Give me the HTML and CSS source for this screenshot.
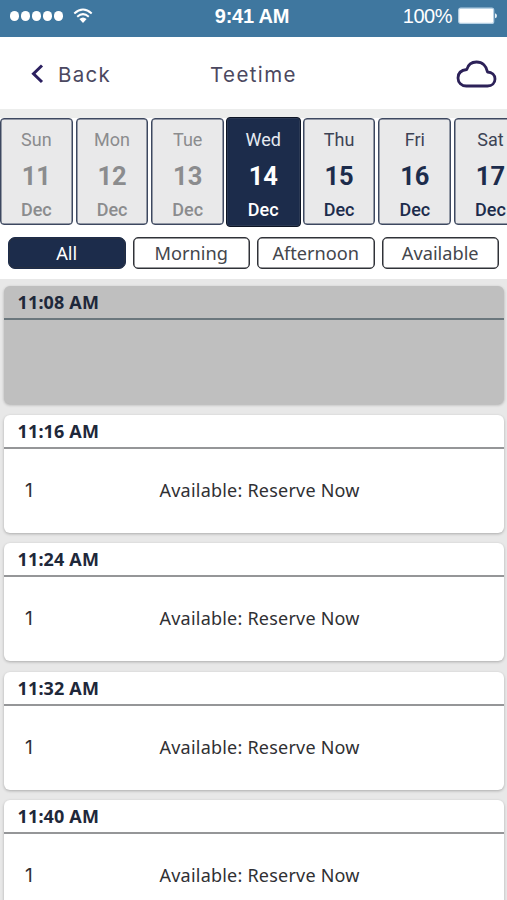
FILE: index.html
```html
<!DOCTYPE html>
<html lang="en">
<head>
<meta charset="utf-8">
<title>Teetime</title>
<link rel="stylesheet" href="styles.css">
</head>
<body>
<div class="app">
  <div class="status">
    <div class="signal">
      <span class="dots"><i></i><i></i><i></i><i></i><i></i></span>
      <svg class="wifi" width="20" height="16" viewBox="0 0 20 16" fill="none" stroke="#fff" stroke-width="2"><path d="M1.3 5.4Q10 -2.4 18.7 5.4"/><path d="M4.2 8.7Q10 3.6 15.8 8.7"/><path d="M6.4 11Q10 8 13.6 11L10 15Z" fill="#fff" stroke="none"/></svg>
    </div>
    <div class="clock">9:41 AM</div>
    <div class="power"><span>100%</span>
      <svg width="40" height="18" viewBox="0 0 40 18"><rect x=".7" y="1.2" width="35" height="15.2" rx="2" fill="#fff" stroke="#b5d0e4" stroke-width="1.2"/><path d="M37 6.3q2 .5 2 2.5t-2 2.5z" fill="#e5eff6"/></svg>
    </div>
  </div>
  <header class="nav">
    <div class="back"><svg width="14" height="20" viewBox="0 0 14 20" fill="none" stroke="#2c2060" stroke-width="3"><path d="M12 1.500L3.500 9.700l8.500 8.300"/></svg><span>Back</span></div>
    <h1>Teetime</h1>
    <svg class="cloud" width="41" height="28" viewBox="0 0 41 28" fill="none" stroke="#2c2158" stroke-width="2.8" stroke-linejoin="round"><path d="M10.300 26H31.500C36 26 39 23 39 19C39 15 36 12.200 31.500 12C30.500 6 26.500 2 20.500 2C15.500 2 12 5 10.800 9.500C5.500 10 2 13 2 18C2 22.500 5.500 26 10.300 26Z"/></svg>
  </header>
  <div class="dates">
    <div class="day past"><span>Sun</span><b>11</b><em>Dec</em></div>
    <div class="day past"><span>Mon</span><b>12</b><em>Dec</em></div>
    <div class="day past"><span>Tue</span><b>13</b><em>Dec</em></div>
    <div class="day active"><span>Wed</span><b>14</b><em>Dec</em></div>
    <div class="day"><span>Thu</span><b>15</b><em>Dec</em></div>
    <div class="day"><span>Fri</span><b>16</b><em>Dec</em></div>
    <div class="day"><span>Sat</span><b>17</b><em>Dec</em></div>
  </div>
  <div class="filters">
    <div class="pill on">All</div><div class="pill">Morning</div><div class="pill">Afternoon</div><div class="pill">Available</div>
  </div>
  <main class="list">
    <section class="slot closed"><h2>11:08 AM</h2></section>
    <section class="slot"><h2>11:16 AM</h2><div class="row"><span class="num">1</span><span>Available: Reserve Now</span></div></section>
    <section class="slot"><h2>11:24 AM</h2><div class="row"><span class="num">1</span><span>Available: Reserve Now</span></div></section>
    <section class="slot"><h2>11:32 AM</h2><div class="row"><span class="num">1</span><span>Available: Reserve Now</span></div></section>
    <section class="slot"><h2>11:40 AM</h2><div class="row"><span class="num">1</span><span>Available: Reserve Now</span></div></section>
  </main>
</div>
</body>
</html>
```
FILE: styles.css
```css
* { box-sizing: border-box; }
body { margin: 0; }
.app { width: 507px; height: 900px; overflow: hidden; background: #fff; font-family: "Noto Sans", sans-serif; display: flex; flex-direction: column; }
.status { height: 37px; flex: none; background: #3f779f; color: #fff; display: grid; grid-template-columns: 1fr auto 1fr; align-items: center; padding: 0 9px 5px 10px; font-family: "Liberation Sans", sans-serif; }
.signal { display: flex; align-items: center; gap: 10px; }
.dots { display: flex; gap: 1.700px; }
.dots i { width: 9.2px; height: 9.2px; border-radius: 50%; background: #fff; }
.clock { font-size: 20px; font-weight: bold; letter-spacing: -0.2px; margin-right: 4px; }
.power { display: flex; align-items: center; justify-content: flex-end; gap: 6px; font-size: 20px; letter-spacing: -0.5px; }
.nav { height: 72px; flex: none; display: grid; grid-template-columns: 1fr auto 1fr; align-items: center; padding: 2px 10px 0; color: #4b4860; font-family: Inter, sans-serif; }
.back { display: flex; align-items: center; gap: 14px; font-size: 20.500px; letter-spacing: 1.300px; padding-left: 20px; }
.nav h1 { margin: 0; font-size: 20.500px; font-weight: 400; letter-spacing: 1.400px; }
.cloud { justify-self: end; }
.dates { height: 119px; flex: none; display: flex; gap: 3px; padding-top: 9px; background: linear-gradient(#ecedec 9px, #fff 9px); font-family: Roboto, sans-serif; color: #1c2c4c; }
.day { flex: none; width: 72.7px; height: 107px; border: 1px solid #3d4860; box-shadow: inset 0 0 0 0.5px #3d4860; border-radius: 4px; background: #e9e9ea; display: flex; flex-direction: column; align-items: center; }
.day span { font-size: 18px; line-height: 22px; margin-top: 10px; color: #3c4355; }
.day b { font-size: 25.500px; line-height: 30px; margin-top: 10px; font-weight: 700; }
.day em { font-style: normal; font-weight: 500; font-size: 18px; line-height: 22px; margin-top: 8px; }
.day.past, .day.past span { color: #8b8c8e; }
.day.active { background: #1c2c4b; border-color: #0c1424; color: #fff; width: 75px; height: 110px; margin: -1px -1px 0 -1.300px; padding-top: 1px; }
.day.active span { color: #e6eaf1; }
.filters { height: 51px; flex: none; display: grid; grid-template-columns: repeat(4, 1fr); gap: 7px; padding: 9px 8px 10px; }
.pill { border: 1px solid #303238; box-shadow: inset 0 0 0 0.5px #303238; border-radius: 5px; display: flex; align-items: center; justify-content: center; font-size: 18.200px; color: #44464c; }
.pill.on { background: #1c2c4b; border-color: #1c2c4b; color: #fff; border-radius: 7px; }
.list { flex: none; background: #e8e8e8; padding: 7px 3px 0 4px; display: flex; flex-direction: column; gap: 10.600px; }
.slot { height: 118px; flex: none; background: #fff; border-radius: 6px; box-shadow: 0 1px 3px #0004; }
.slot h2 { margin: 0; height: 34px; border-bottom: 2px solid #959698; padding-left: 13.500px; font-size: 18px; letter-spacing: 0.15px; line-height: 33px; font-weight: 700; color: #1e283a; }
.slot.closed { background: #bfbfbf; }
.slot.closed h2 { border-color: #6b777d; }
.row { height: 82px; display: grid; grid-template-columns: 134.500px 1fr; align-items: center; padding-left: 21px; font-size: 18px; letter-spacing: 0.22px; color: #303033; }
.num { font-family: Inter, sans-serif; padding-top: 1px; font-size: 19px; }
```
